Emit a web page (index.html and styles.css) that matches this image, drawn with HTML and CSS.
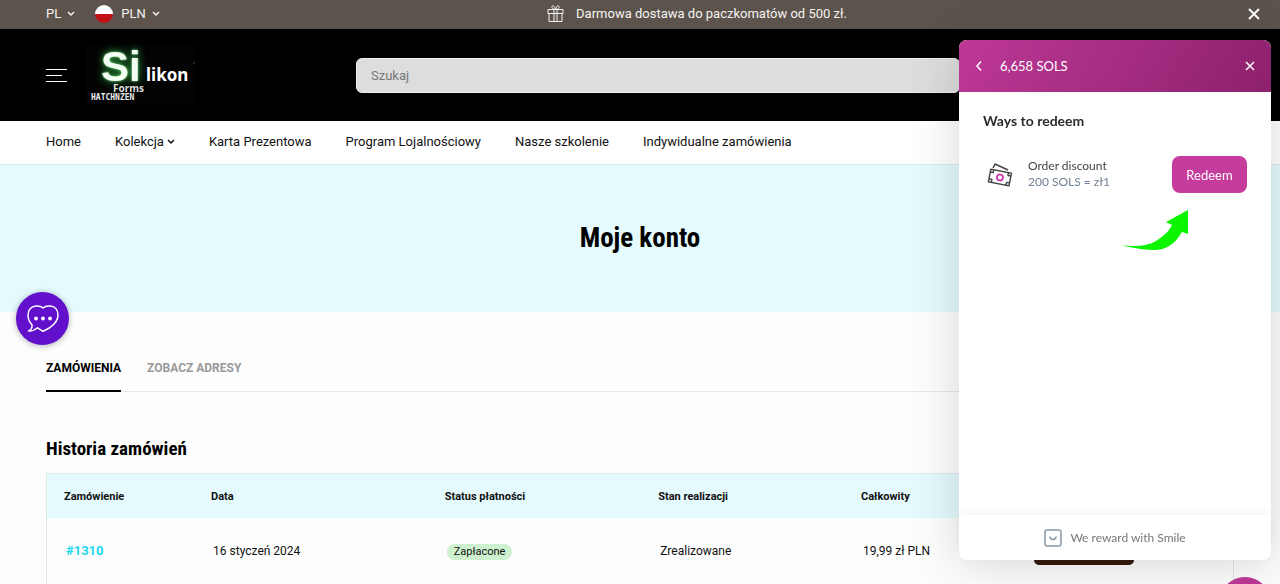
FILE: index.html
```html
<!DOCTYPE html>
<html lang="pl">
<head>
<meta charset="utf-8">
<meta name="viewport" content="width=device-width, initial-scale=1">
<title>Moje konto</title>
<link rel="stylesheet" href="styles.css">
</head>
<body>
<div class="topbar">
  <div class="locale">
    <button class="locale-btn" type="button">PL
      <svg width="8" height="6" viewBox="0 0 8 6"><path d="M1 1l3 3 3-3" fill="none" stroke="currentColor" stroke-width="1.5"/></svg>
    </button>
    <button class="locale-btn" type="button"><span class="flag"></span>PLN
      <svg width="8" height="6" viewBox="0 0 8 6"><path d="M1 1l3 3 3-3" fill="none" stroke="currentColor" stroke-width="1.5"/></svg>
    </button>
  </div>
  <p class="promo">
    <svg width="17" height="18" viewBox="0 0 17 18" fill="none" stroke="currentColor"><path d="M1 4.5h15v4H1zM2 8.5v8h13v-8M7 4.5v12M10 4.5v12M8.5 4.5C6 4.5 4.5 3 5 1.500S8 1 8.500 4.500C9 1 11.500 0 12 1.500S11 4.500 8.500 4.500z"/></svg>
    Darmowa dostawa do paczkomatów od 500 zł.
  </p>
  <button class="icon-btn" type="button">
    <svg width="12" height="12" viewBox="0 0 12 12"><path d="M1 1l10 10M11 1L1 11" stroke="currentColor" stroke-width="2"/></svg>
  </button>
</div>

<header class="header">
  <button class="icon-btn" type="button">
    <svg width="21" height="14" viewBox="0 0 21 14"><path d="M0 1.5h21M0 7.5h16M0 13.5h21" stroke="currentColor"/></svg>
  </button>
  <a class="logo" href="#">
    <svg width="110" height="58" viewBox="0 0 110 58">
      <rect width="110" height="58" fill="#020302"/>
      <text class="logo-si" x="15" y="35">Si</text>
      <text class="logo-likon" x="60" y="35">likon</text>
      <text class="logo-forms" x="27" y="46">Forms</text>
      <text class="logo-sub" x="5" y="54">HATCHNZEN</text>
      <path d="M107 18l2-2" stroke="#444"/>
    </svg>
  </a>
  <input class="search" type="search" placeholder="Szukaj">
</header>

<nav class="nav">
  <a href="#">Home</a>
  <a href="#">Kolekcja <svg width="8" height="6" viewBox="0 0 8 6"><path d="M1 1l3 3 3-3" fill="none" stroke="currentColor" stroke-width="1.5"/></svg></a>
  <a href="#">Karta Prezentowa</a>
  <a href="#">Program Lojalnościowy</a>
  <a href="#">Nasze szkolenie</a>
  <a href="#">Indywidualne zamówienia</a>
</nav>

<section class="hero"><h1>Moje konto</h1></section>

<main class="account">
  <div class="tabs">
    <a class="tab active" href="#">ZAMÓWIENIA</a>
    <a class="tab" href="#">ZOBACZ ADRESY</a>
  </div>
  <h2>Historia zamówień</h2>
  <table class="orders">
    <thead>
      <tr><th class="c-order">Zamówienie</th><th class="c-date">Data</th><th class="c-pay">Status płatności</th><th class="c-state">Stan realizacji</th><th class="c-total">Całkowity</th><th></th></tr>
    </thead>
    <tbody>
      <tr>
        <td><a class="order-link" href="#">#1310</a></td>
        <td>16 styczeń 2024</td>
        <td><span class="badge">Zapłacone</span></td>
        <td>Zrealizowane</td>
        <td>19,99 zł PLN</td>
        <td><button class="order-action" type="button"></button></td>
      </tr>
    </tbody>
  </table>
</main>

<button class="chat" type="button">
  <svg width="32" height="28" viewBox="0 0 32 28"><path d="M16 3C18 1 21 .8 23.500 1C28 1.500 31 5 31 10C31 15 28 19 23 22.500Q19 25 16 26.300L10.500 22.800C8 25 5 26.300 1.500 26C4.500 24.500 5.500 22 4.800 19.500C2 16.500 1 14 1 10.500C1 5 4 1.500 9 1C12 .8 14.500 1.200 16 3z" fill="none" stroke="#fff" stroke-width="1.500" stroke-linejoin="round"/><g fill="#fff"><circle cx="9" cy="13.500" r="1.900"/><circle cx="16" cy="13.500" r="1.900"/><circle cx="23" cy="13.500" r="1.900"/></g></svg>
</button>

<button class="launcher" type="button"></button>

<aside class="panel">
  <div class="panel-head">
    <button class="icon-btn" type="button"><svg width="8" height="10" viewBox="0 0 8 10"><path d="M6 .5L2 5l4 4.500" fill="none" stroke="currentColor" stroke-width="1.500"/></svg></button>
    <span class="points">6,658 SOLS</span>
    <button class="icon-btn" type="button"><svg width="10" height="10" viewBox="0 0 10 10"><path d="M1 1l8 8M9 1L1 9" stroke="currentColor" stroke-width="1.500"/></svg></button>
  </div>
  <div class="panel-body">
    <h3>Ways to redeem</h3>
    <div class="reward">
      <svg width="26" height="24" viewBox="0 0 26 24" fill="none" stroke="#444" stroke-width="1.400" stroke-linejoin="round"><path d="M6 5L8 1l13 6"/><g transform="rotate(11 13 14)"><rect x="2.500" y="8" width="21" height="13"/><path d="M2.500 11h3V8M20.500 8v3h3M2.500 18h3v3M20.500 21v-3h3"/><circle cx="13" cy="14.500" r="3" stroke="#cf3bab" stroke-width="1.800"/></g></svg>
      <div class="reward-text"><div>Order discount</div><div class="cost">200 SOLS = zł1</div></div>
      <button class="redeem" type="button">Redeem</button>
    </div>
    <svg class="arrow" width="70" height="42" viewBox="0 0 70 42"><path d="M1 36C17 38 29 37 37 32C45 27 50 22 53 16L47 13L69 1V25L63 23C56 35 47 41 35 41C23 41 11 38 1 36z" fill="#0bf500"/></svg>
  </div>
  <div class="panel-foot">
    <svg width="18" height="18" viewBox="0 0 18 18" fill="none" stroke="#8796a5" stroke-width="1.500"><rect x="1" y="1" width="16" height="16" rx="2"/><path d="M6 7.500c0 4 6 4 6 0"/></svg>
    We reward with Smile
  </div>
</aside>
</body>
</html>
```

FILE: styles.css
```css
* { box-sizing: border-box; }
body { margin: 0; background: #fdfdfd; color: #111; font: 13px/20px Roboto, sans-serif; }
a { color: inherit; text-decoration: none; }
h1, h2, h3, p { margin: 0; }
button { font: inherit; color: inherit; border: 0; padding: 0; background: none; cursor: pointer; }
svg { display: block; flex: none; }

.topbar { display: grid; grid-template-columns: 1fr auto 1fr; align-items: center; height: 29px; padding: 0 20px 2px 46px; background: #5c544c; color: #f5f3f1; }
.topbar > .icon-btn { justify-self: end; color: #fff; }
.locale { display: flex; gap: 20px; }
.locale-btn { display: flex; align-items: center; gap: 6px; }
.flag { width: 18px; height: 18px; margin-right: 2px; border-radius: 50%; background: linear-gradient(#fff 50%, #c01414 50%); }
.promo { display: flex; align-items: center; gap: 12px; margin-left: 88px; }

.header { display: flex; align-items: center; height: 92px; padding-left: 46px; background: #000; color: #fff; }
.logo { margin-left: 19px; }
.logo svg { overflow: visible; }
.logo-si { font: bold 42px "Liberation Sans", sans-serif; fill: #f4fff4; filter: drop-shadow(0 0 1px #6fe07c) drop-shadow(0 0 4px #2f9a42); }
.logo-likon { font: bold 17px "Noto Sans", sans-serif; fill: #fff; }
.logo-forms { font: bold 10px "Noto Sans", sans-serif; fill: #ddd; }
.logo-sub { font: bold 8px "DejaVu Sans Mono", monospace; fill: #eee; }
.search { flex: 1; height: 35px; margin: 0 320px 0 160px; padding: 0 14px; border: 1px solid #eee; border-radius: 6px; background: #ddd; font: inherit; }
.search::placeholder { color: #777; }

.nav { display: flex; gap: 34px; height: 43px; padding: 10px 46px 12px; background: #fff; }
.nav a { display: flex; align-items: center; gap: 3px; white-space: nowrap; }

.hero { display: grid; place-items: center; height: 148px; padding-bottom: 2px; border-top: 1px solid #d5eef1; background: #e4fafd; }
h1, h2 { font-family: "Roboto Condensed", "Liberation Sans Narrow", Roboto, sans-serif; font-weight: 700; color: #000; }
h1 { font-size: 27px; line-height: 32px; }
h2 { margin-top: 45px; font-size: 19px; line-height: 24px; }

.account { padding: 46px 46px 0; }
.tabs { display: flex; gap: 26px; border-bottom: 1px solid #e8e8e8; }
.tab { height: 34px; margin-bottom: -1px; color: #999; font-size: 12px; font-weight: 700; }
.tab.active { color: #000; border-bottom: 2px solid #000; }

.orders { width: 100%; margin-top: 12px; table-layout: fixed; border-collapse: separate; border-spacing: 0; border: 1px solid #dfe8e9; border-bottom: 0; }
.orders th { height: 44px; padding: 2px 17px 0; background: #e4fafd; text-align: left; font-size: 11px; }
.orders td { height: 66px; padding: 0 19px; font-size: 12px; }
.c-order { width: 12.4%; }
.c-date { width: 19.7%; }
.c-pay { width: 18%; }
.c-state { width: 17.1%; }
.c-total { width: 14.4%; }
.orders .order-link { color: #22d8ee; font-size: 13px; font-weight: 700; }
.badge { display: inline-block; padding: 0 7px; border-radius: 8px; background: #cdf0cf; font-size: 11px; line-height: 16px; }
.order-action { display: block; width: 100px; height: 28px; border-radius: 5px; background: #351a0b; }

.chat { position: fixed; left: 16px; top: 292px; display: grid; place-items: center; width: 53px; height: 53px; border-radius: 50%; background: #6210cc; box-shadow: 0 1px 6px rgba(0, 0, 0, .3); }
.launcher { position: fixed; right: 9px; bottom: -45px; width: 52px; height: 52px; border-radius: 50%; background: #bd3896; }

.panel { position: fixed; top: 40px; right: 9px; bottom: 24px; display: flex; flex-direction: column; width: 312px; border-radius: 8px; background: #fff; box-shadow: 0 4px 50px rgba(0, 0, 0, .16); color: #444; font: 12px/16px Lato, sans-serif; }
.panel-head { display: flex; align-items: center; height: 52px; padding: 0 16px; border-radius: 8px 8px 0 0; background: linear-gradient(120deg, #bd3896, #8d216d); color: #fff; font-size: 13px; }
.points { flex: 1; margin-left: 17px; }
.panel-body { position: relative; flex: 1; padding: 19px 24px; }
.panel-body h3 { font-size: 14px; line-height: 20px; color: #2c2c2c; }
.reward { display: flex; align-items: center; margin-top: 25px; padding-left: 4px; }
.reward-text { flex: 1; margin-left: 15px; padding-bottom: 2px; }
.cost { color: #708096; }
.redeem { width: 75px; height: 37px; border-radius: 8px; background: #c53c9c; color: #fff; font-size: 13px; }
.arrow { position: absolute; right: 82px; top: 117px; }
.panel-foot { display: flex; align-items: center; justify-content: center; gap: 8px; height: 45px; border-radius: 0 0 8px 8px; box-shadow: 0 -2px 10px rgba(0, 0, 0, .05); color: #777; }
```
